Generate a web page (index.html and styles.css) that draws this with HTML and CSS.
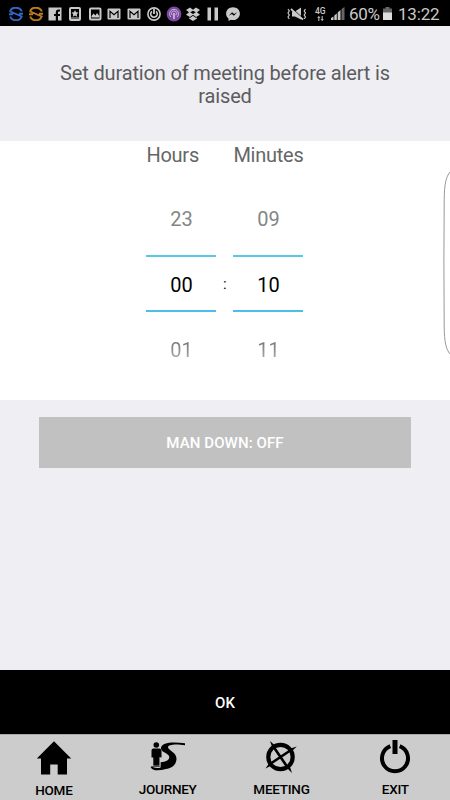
FILE: index.html
```html
<!DOCTYPE html>
<html lang="en">
<head>
<meta charset="utf-8">
<title>Meeting duration</title>
<link rel="stylesheet" href="styles.css">
</head>
<body>
<div class="screen">
  <header class="status">
    <div class="notifications">
      <svg class="blue" viewBox="0 0 14 14"><path d="M12.800 4.500C11-.5 2-.5 1.300 4.500L12.700 9.500C11 14.500 3 14.500 1.200 9.500M0 7.200h4M10 6.800h4" fill="none" stroke="currentColor" stroke-width="1.900"/></svg>
      <svg class="orange" viewBox="0 0 14 14"><path d="M12.800 4.500C11-.5 2-.5 1.300 4.500L12.700 9.500C11 14.500 3 14.500 1.200 9.500M0 7.200h4M10 6.800h4" fill="none" stroke="currentColor" stroke-width="1.900"/></svg>
      <svg viewBox="0 0 14 14"><path d="M.5.5h13v13H10V9h2V7h-2V5.500q0-1 1-1h1v-2h-2Q7.800 2.500 7.800 5v2H6v2h1.800v4.500H.5z" fill="currentColor"/></svg>
      <svg viewBox="0 0 14 14"><rect x="2" y="1" width="10" height="12" rx="1" fill="none" stroke="currentColor" stroke-width="2"/><path d="M7 3l1.100 2.300 2.400.3-1.700 1.700.4 2.400L7 8.600 4.800 9.700l.4-2.400-1.700-1.700 2.400-.3z" fill="currentColor"/><path d="M3 11h8" stroke="currentColor"/></svg>
      <svg viewBox="0 0 14 14"><rect x="2" y="1.500" width="10.500" height="11" rx="1" fill="none" stroke="currentColor" stroke-width="2"/><path d="M3.500 10.500V9l2-2.500 2 2L9 6l2.300 3v1.500z" fill="currentColor"/></svg>
      <svg viewBox="0 0 14 14"><rect x=".5" y="1.500" width="13" height="11" rx="1" fill="currentColor"/><path d="M3 11V4.200l4 3.500 4-3.500V11" fill="none" stroke="#000" stroke-width="1.200"/></svg>
      <svg viewBox="0 0 14 14"><rect x=".5" y="1.500" width="13" height="11" rx="1" fill="currentColor"/><path d="M3 11V4.200l4 3.500 4-3.500V11" fill="none" stroke="#000" stroke-width="1.200"/></svg>
      <svg viewBox="0 0 14 14"><g fill="none" stroke="currentColor"><circle cx="7" cy="7" r="6.100" stroke-width="1.600"/><path d="M5 4.300a3.300 3.300 0 1 0 4 0" stroke-width="1.600"/><path d="M7 2v5" stroke-width="1.800"/></g></svg>
      <svg class="podcast" viewBox="0 0 14 14"><circle cx="7" cy="7" r="7.400" fill="#7b4aa0"/><g fill="none" stroke="#c9b5d8"><path d="M3.800 10a4.500 4.500 0 1 1 6.400 0M5.200 8.200a2.500 2.500 0 1 1 3.600 0"/><path d="M7 6v6" stroke-width="1.800"/></g></svg>
      <svg viewBox="0 0 14 14"><path d="M0 3l4-2.500 3 2.300 3-2.300L14 3l-3 2.300L14 7.700l-4 2.400-3-2.300-3 2.300-4-2.400 3-2.400zM7 3.700L4.200 5.300 7 6.900l2.800-1.600zM3 10.300l1 .7 3-2.200L10 11l1-.7v1.200L7 14l-4-2.500z" fill="currentColor" fill-rule="evenodd"/></svg>
      <svg viewBox="0 0 14 14"><path d="M1.500.5h3.500v13H1.500zM8.500.5H12v13H8.500z" fill="currentColor"/></svg>
      <svg viewBox="0 0 14 14"><path d="M7 .2C3 .2.1 3 .1 6.700c0 2 .9 3.500 2.400 4.700V14l2.300-1.200c4.700 1.200 9.100-1.800 9.100-6.100C13.900 3 11 .2 7 .2z" fill="currentColor"/><path d="M2.800 8.700l3.300-3.500 2 1.800 3.100-1.800-3.300 3.500-2-1.800z" fill="#000"/></svg>
    </div>
    <div class="system">
      <svg class="mute" viewBox="0 0 20 14"><g fill="none" stroke="currentColor"><path d="M1 2l1.300 2L1 6l1.300 2L1 10l1.300 2M18.500 2l-1.300 2 1.300 2-1.300 2 1.300 2-1.300 2" stroke-width="1.200"/><path d="M4 2l12 10.500" stroke-width="2"/></g><path d="M5 4.500h3l6-4v12l-6-3H5z" fill="currentColor"/><path d="M5.500 1.800l10.500 9.200" stroke="#000" stroke-width=".7"/></svg>
      <div class="network"><span>4G</span><svg viewBox="0 0 8 6"><path d="M2 0l2 2.200H2.600V6H1.400V2.200H0zM6 6L4 3.800h1.400V0h1.200v3.800H8z" fill="currentColor"/></svg></div>
      <svg class="signal" viewBox="0 0 14 14"><path d="M0 12l2.500-1.500V14H0zM3.300 9.500l2.500-2V14H3.300zM6.700 6.500l2.800-2.500v10H6.700z" fill="currentColor"/><path d="M10.500 3L13.500 1v13h-3z" fill="#666"/></svg>
      <span class="percent">60%</span>
      <svg class="battery" viewBox="0 0 9 13"><path d="M2.500 0h4v1.500H9V6H0V1.500h2.500z" fill="#666"/><path d="M0 5.500h9V13H0z" fill="#ddd"/></svg>
      <span class="clock">13:22</span>
    </div>
  </header>

  <h1 class="title">Set duration of meeting before alert is raised</h1>

  <main class="picker">
    <section class="column">
      <h2>Hours</h2>
      <div class="value before">23</div>
      <div class="value current">00</div>
      <div class="value after">01</div>
    </section>
    <span class="colon">:</span>
    <section class="column">
      <h2>Minutes</h2>
      <div class="value before">09</div>
      <div class="value current">10</div>
      <div class="value after">11</div>
    </section>
    <svg class="edge" viewBox="0 0 7 186"><path d="M7 2C3 7 1.300 14 1.200 30L.9 93l.3 63C1.300 172 3 179 7 184" fill="#fff" stroke="#8c8c8c" stroke-width=".9"/></svg>
  </main>

  <div class="options"><button class="mandown">MAN DOWN: OFF</button></div>
  <button class="ok">OK</button>

  <nav class="tabs">
    <a class="tab home"><svg viewBox="0 0 36 34"><path d="M18 .3L35.200 17.500h-4.200V33.500h-9.300V23.500h-7.500v10H5V17.500H.8z" fill="#000"/></svg><span>HOME</span></a>
    <a class="tab journey"><svg viewBox="0 0 36 34"><path d="M35 3.300C25 1.800 11.300 1.500 11 8c-.2 4.500 8.500 5 8.300 9.300-.2 3-3.500 4.700-8.800 5v6.700C20 30 26.500 26 26.500 18.500c0-6-8.700-8.500-8.500-11.300C18.200 4.500 25 3.800 35 5.200z" fill="#000"/><circle cx="6.300" cy="5" r="2.800" fill="#000"/><path d="M3.500 8.500h5.800c1.500 0 2.200 1 2.200 2.500v6.500H9.700V27H3.300v-9.500H1.500V11c0-1.500.5-2.500 2-2.500z" fill="#000"/><path d="M1.500 26.500c1.500 3.500 9 2.800 14 1.500" fill="none" stroke="#000" stroke-width="2"/><path d="M2.800 26h7.200V17" fill="none" stroke="#ccc" stroke-width=".7"/></svg><span>JOURNEY</span></a>
    <a class="tab meeting"><svg viewBox="0 0 36 34"><circle cx="17.500" cy="17" r="12.200" fill="none" stroke="#000" stroke-width="4.200"/><path d="M10 6l15 22M28 10L7 24" fill="none" stroke="#000" stroke-width="2.600"/><path d="M7 1l5.500 5-3 2zM33.800 6.500L28 12l-2-3zM29 33l-5.500-5.500 3-2zM2.500 28.500L7 22l2.500 3z" fill="#000"/></svg><span>MEETING</span></a>
    <a class="tab exit"><svg viewBox="0 0 36 34"><path d="M13.300 6.200A13 13 0 1 0 22.700 6.200" fill="none" stroke="#000" stroke-width="4"/><path d="M15.500 0h5v14h-5z" fill="#000"/></svg><span>EXIT</span></a>
  </nav>
</div>
</body>
</html>
```
FILE: styles.css
```css
* { box-sizing: border-box; }
body { margin: 0; font-family: Roboto, "Liberation Sans", sans-serif; }
button { border: 0; padding: 0; font: 500 15px Roboto, "Liberation Sans", sans-serif; }
svg { display: block; flex: none; }

.screen { width: 450px; height: 800px; display: flex; flex-direction: column; background: #efeef3; overflow: hidden; }

.status { height: 26px; flex: none; display: flex; justify-content: space-between; background: #000; color: #c9c9c9; }
.notifications { display: flex; gap: 5.700px; padding: 7px 0 0 9px; }
.notifications svg { width: 14px; height: 14px; }
.notifications .podcast { overflow: visible; }
.notifications .blue { color: #3168c8; }
.notifications .orange { color: #bd7b20; }
.system { display: flex; align-items: flex-start; padding-right: 9px; font-size: 17px; line-height: 20px; }
.mute { width: 20px; height: 14px; margin: 7px 8px 0 0; }
.network { width: 13px; margin: 7px 3px 0 0; font-size: 8.500px; font-weight: 500; line-height: 8px; }
.network svg { width: 7px; height: 5px; margin: 1px 0 0 2px; }
.signal { width: 14px; height: 14px; margin: 6px 4px 0 0; }
.percent, .clock { margin-top: 4px; white-space: nowrap; }
.percent { width: 34px; letter-spacing: -.3px; }
.battery { width: 9px; height: 13px; margin: 7px 6px 0 0; }
.clock { width: 43px; letter-spacing: -.2px; }

.title { height: 115px; flex: none; margin: 0; padding: 36px 50px 0; font-size: 20px; font-weight: 400; line-height: 23px; letter-spacing: -.15px; text-align: center; color: #5c5c5e; }

.picker { position: relative; height: 259px; flex: none; display: flex; justify-content: center; padding-right: .2px; background: #fff; }
.column { width: 70px; font-size: 20px; text-align: center; }
.column h2 { height: 44px; margin: 0; padding-top: 2px; font-size: 20px; font-weight: 400; line-height: 24px; letter-spacing: -.25px; color: #666; white-space: nowrap; }
.column:first-child h2 { text-align: left; }
.value { line-height: 24px; }
.before { height: 70px; padding-top: 22px; color: #858585; }
.current { height: 57px; padding-top: 16px; border-top: 2px solid #59c6ec; border-bottom: 2px solid #4bbfe8; color: #000; }
.after { padding-top: 26px; background: linear-gradient(#777 60%, #b5b5b5); background-clip: text; color: transparent; }
.colon { width: 17px; padding-top: 134px; font-size: 15px; line-height: 18px; text-align: center; }
.edge { position: absolute; right: 0; top: 29px; width: 7px; height: 186px; }

.options { flex: 1; padding: 17px 39px 0; }
.mandown { display: block; width: 100%; height: 51px; background: #c1c1c1; color: #fff; letter-spacing: .1px; }
.ok { height: 64px; flex: none; padding-top: 1px; background: #000; color: #fff; }

.tabs { height: 66px; flex: none; display: grid; grid-template-columns: repeat(4, 113.800px); margin-left: -3px; border-top: 1px solid #aaa; background: #ccc; }
.tab { display: flex; flex-direction: column; align-items: center; padding-top: 5px; font-size: 13.500px; font-weight: 500; line-height: 16px; letter-spacing: -.25px; color: #000; }
.home { padding-top: 6px; }
.tab svg { width: 36px; height: 34px; }
.tab span { margin-top: 7px; }
```
